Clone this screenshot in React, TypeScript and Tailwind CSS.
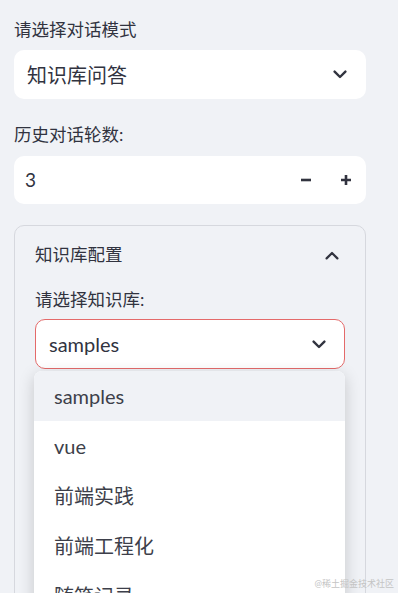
import React from "react";

const ChevronDown = () => (
  <svg width="14" height="9" viewBox="0 0 14 9" fill="none">
    <path d="M1.6 1.6 L7 7 L12.4 1.6" stroke="#31333f" strokeWidth="2.4" strokeLinecap="round" strokeLinejoin="round" />
  </svg>
);

const ChevronUp = () => (
  <svg width="14" height="9" viewBox="0 0 14 9" fill="none">
    <path d="M1.6 7.4 L7 2 L12.4 7.4" stroke="#31333f" strokeWidth="2.2" strokeLinecap="round" strokeLinejoin="round" />
  </svg>
);

const Minus = () => (
  <svg width="12" height="12" viewBox="0 0 12 12" fill="none">
    <path d="M1 6 H11" stroke="#31333f" strokeWidth="2.6" />
  </svg>
);

const Plus = () => (
  <svg width="12" height="12" viewBox="0 0 12 12" fill="none">
    <path d="M1 6 H11 M6 1 V11" stroke="#31333f" strokeWidth="2.6" />
  </svg>
);

export default function App() {
  const items = ["samples", "vue", "前端实践", "前端工程化", "随笔记录"];
  return (
    <div
      className="relative w-[398px] h-[593px] overflow-hidden bg-[#f0f2f6] text-[#31333f]"
      style={{ fontFamily: '"Lato", "Noto Sans CJK SC", sans-serif' }}
    >
      <div className="pl-[14px] pr-[32px] pt-[20px]">
        <div className="text-[17.5px] leading-[20px]">请选择对话模式</div>
        <div className="mt-[10px] h-[49px] rounded-[10px] bg-white flex items-center justify-between pl-[13px] pr-[16px]">
          <span className="text-[20px] leading-[24px]">知识库问答</span>
          <span className="w-[20px] flex justify-center"><ChevronDown /></span>
        </div>

        <div className="mt-[26px] text-[17.5px] leading-[20px]">历史对话轮数:</div>
        <div className="mt-[11px] h-[48px] rounded-[10px] bg-white flex items-center justify-between pl-[11px]">
          <span className="text-[19px] leading-[24px]">3</span>
          <div className="flex h-full">
            <div className="w-[40px] flex items-center justify-center"><Minus /></div>
            <div className="w-[40px] flex items-center justify-center"><Plus /></div>
          </div>
        </div>

        <div className="mt-[21px] h-[500px] rounded-[10px] border border-[#d6d8de] relative">
          <div className="h-[58px] flex items-center justify-between pl-[20px] pr-[23px]">
            <span className="text-[17.5px] leading-[20px]">知识库配置</span>
            <span className="w-[20px] flex justify-center"><ChevronUp /></span>
          </div>
          <div className="px-[20px]">
            <div className="mt-[6px] text-[17.5px] leading-[20px]">请选择知识库:</div>
            <div className="mt-[9px] h-[50px] rounded-[10px] bg-white border border-[#e46a6a] flex items-center justify-between pl-[13px] pr-[15px]">
              <span className="text-[20px] leading-[24px]">samples</span>
              <span className="w-[20px] flex justify-center"><ChevronDown /></span>
            </div>
            <div className="relative">
              <div className="absolute left-[-1px] right-0 top-[2px] bg-white rounded-t-[8px] shadow-[0_4px_16px_rgba(0,0,0,0.18)] overflow-hidden">
                {items.map((it, i) => (
                  <div
                    key={it}
                    className={
                      "h-[50px] flex items-center pl-[20px] text-[20px] leading-[24px] text-[#3d3f4a] " +
                      (i === 0 ? "bg-[#f0f2f6]" : "bg-white")
                    }
                  >
                    {it}
                  </div>
                ))}
              </div>
            </div>
          </div>
        </div>
      </div>
      <div className="absolute right-[4px] bottom-[3px] text-[9px] leading-[12px] text-[#c4c4c4]">
        @稀土掘金技术社区
      </div>
    </div>
  );
}
